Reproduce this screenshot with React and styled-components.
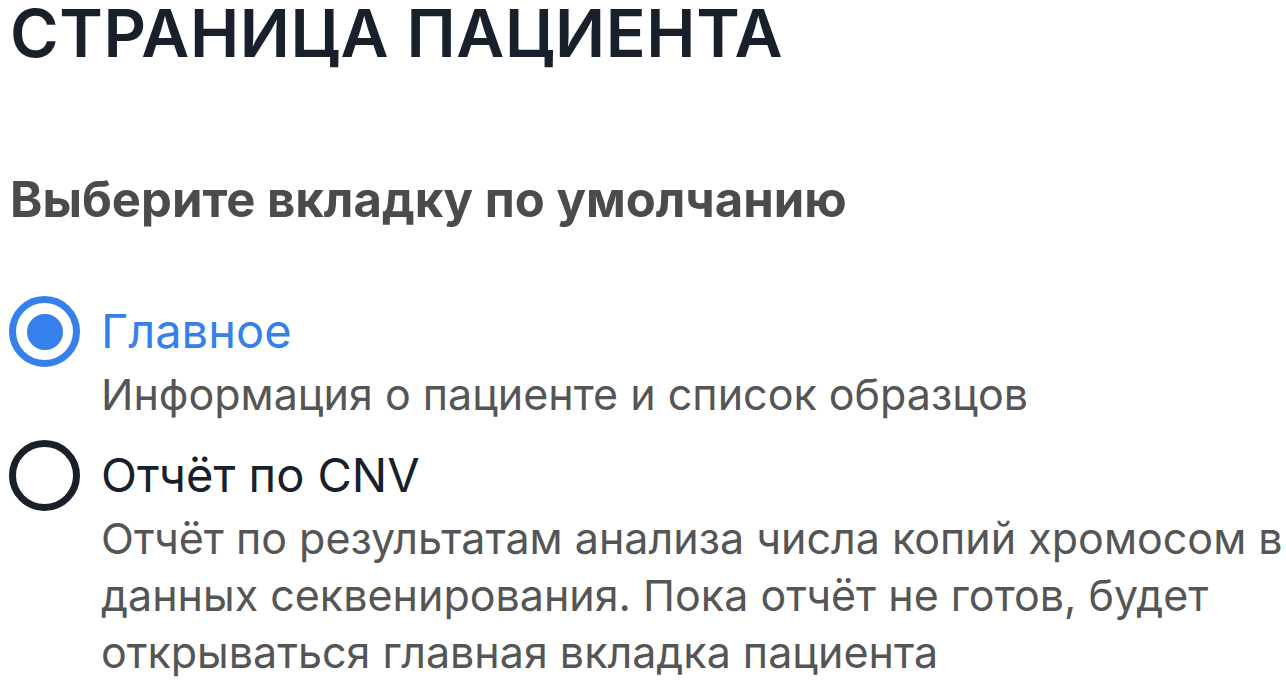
import React, { useState } from "react";
import styled, { createGlobalStyle } from "styled-components";

const Global = createGlobalStyle`
  html, body { margin: 0; padding: 0; background: #fff; }
  body { font-family: Inter, "Noto Sans", sans-serif; }
`;

const Page = styled.div`
  padding: 0 0 0 10px;
  display: flex;
  flex-direction: column;
`;

const Title = styled.h1`
  margin: 0;
  font-size: 66px;
  line-height: 66px;
  font-weight: 600;
  color: #17202b;
  letter-spacing: 0.6px;
`;

const Subtitle = styled.h2`
  margin: 104px 0 0;
  font-size: 49px;
  line-height: 60px;
  font-weight: 700;
  color: #4b4b4b;
`;

const Options = styled.div`
  margin-top: 66px;
  display: flex;
  flex-direction: column;
  gap: 17px;
`;

const Option = styled.label`
  display: grid;
  grid-template-columns: 71px 1fr;
  align-items: start;
  column-gap: 21px;
  margin-left: -1px;
  cursor: pointer;
`;

const Radio = styled.span`
  box-sizing: border-box;
  width: 71px;
  height: 71px;
  border-radius: 50%;
  border: 7.5px solid ${(p) => (p.$checked ? "#3580ea" : "#17202b")};
  display: flex;
  align-items: center;
  justify-content: center;
  &::after {
    content: "";
    width: 36px;
    height: 36px;
    border-radius: 50%;
    background: #3580ea;
    display: ${(p) => (p.$checked ? "block" : "none")};
  }
`;

const Texts = styled.div`
  display: flex;
  flex-direction: column;
`;

const Label = styled.span`
  font-size: 47px;
  line-height: 70px;
  color: ${(p) => (p.$checked ? "#3580ea" : "#17202b")};
`;

const Desc = styled.span`
  font-size: 43px;
  line-height: 57px;
  color: #555555;
`;

const items = [
  { id: "main", label: "Главное", desc: "Информация о пациенте и список образцов" },
  {
    id: "cnv",
    label: "Отчёт по CNV",
    desc: "Отчёт по результатам анализа числа копий хромосом в данных секвенирования. Пока отчёт не готов, будет открываться главная вкладка пациента",
  },
];

export default function App() {
  const [value, setValue] = useState("main");
  return (
    <Page>
      <Global />
      <Title>СТРАНИЦА ПАЦИЕНТА</Title>
      <Subtitle>Выберите вкладку по умолчанию</Subtitle>
      <Options>
        {items.map((it) => {
          const checked = value === it.id;
          return (
            <Option key={it.id} onClick={() => setValue(it.id)}>
              <Radio $checked={checked} />
              <Texts>
                <Label $checked={checked}>{it.label}</Label>
                <Desc>{it.desc}</Desc>
              </Texts>
            </Option>
          );
        })}
      </Options>
    </Page>
  );
}
